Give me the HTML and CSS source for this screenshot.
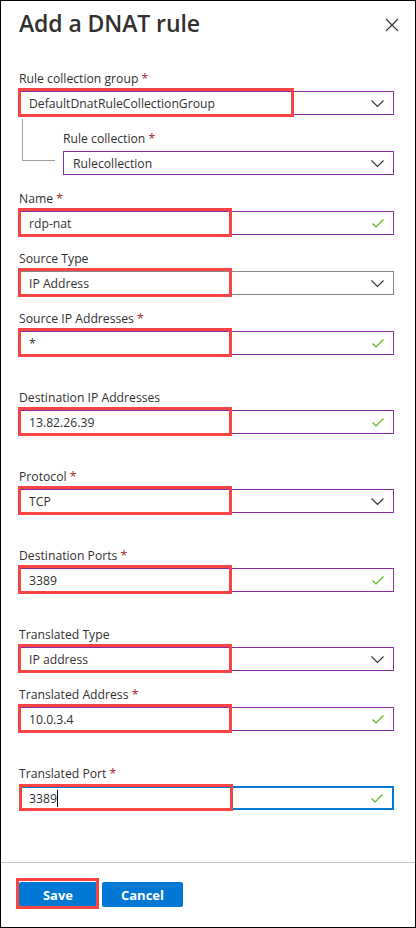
FILE: index.html
```html
<!DOCTYPE html>
<html>
<head>
<meta charset="utf-8">
<link rel="stylesheet" href="styles.css">
</head>
<body>
<div class="panel">
  <header class="head">
    <h1 class="title">Add a DNAT rule</h1>
    <button class="close" aria-label="Close">
      <svg width="14" height="14" viewBox="0 0 14 14"><path d="M1 1L13 13M13 1L1 13" stroke="#323130" stroke-width="1.1" fill="none"/></svg>
    </button>
  </header>

  <div class="form">
    <div class="field">
      <label class="label">Rule collection group <span class="req">*</span></label>
      <div class="input dirty">
        <span class="value">DefaultDnatRuleCollectionGroup</span>
        <svg class="chev" width="13" height="7" viewBox="0 0 13 7"><path d="M0.5 0.5L6.5 6.5L12.5 0.5" stroke="#323130" stroke-width="1.1" fill="none"/></svg>
        <span class="hl hl-wide"></span>
      </div>
    </div>

    <div class="field nested">
      <label class="label">Rule collection <span class="req">*</span></label>
      <div class="input dirty">
        <span class="value">Rulecollection</span>
        <svg class="chev" width="13" height="7" viewBox="0 0 13 7"><path d="M0.5 0.5L6.5 6.5L12.5 0.5" stroke="#323130" stroke-width="1.1" fill="none"/></svg>
      </div>
    </div>

    <div class="field">
      <label class="label">Name <span class="req">*</span></label>
      <div class="input dirty">
        <span class="value">rdp-nat</span>
        <svg class="check" width="12" height="9" viewBox="0 0 12 9"><path d="M0.5 4.5L4 8L11.5 0.5" stroke="#5fb21f" stroke-width="1.2" fill="none"/></svg>
        <span class="hl"></span>
      </div>
    </div>

    <div class="field">
      <label class="label">Source Type</label>
      <div class="input">
        <span class="value">IP Address</span>
        <svg class="chev" width="13" height="7" viewBox="0 0 13 7"><path d="M0.5 0.5L6.5 6.5L12.5 0.5" stroke="#323130" stroke-width="1.1" fill="none"/></svg>
        <span class="hl"></span>
      </div>
    </div>

    <div class="field spaced">
      <label class="label">Source IP Addresses <span class="req">*</span></label>
      <div class="input dirty">
        <span class="value">*</span>
        <svg class="check" width="12" height="9" viewBox="0 0 12 9"><path d="M0.5 4.5L4 8L11.5 0.5" stroke="#5fb21f" stroke-width="1.2" fill="none"/></svg>
        <span class="hl"></span>
      </div>
    </div>

    <div class="field spaced">
      <label class="label">Destination IP Addresses</label>
      <div class="input dirty">
        <span class="value">13.82.26.39</span>
        <svg class="check" width="12" height="9" viewBox="0 0 12 9"><path d="M0.5 4.5L4 8L11.5 0.5" stroke="#5fb21f" stroke-width="1.2" fill="none"/></svg>
        <span class="hl"></span>
      </div>
    </div>

    <div class="field spaced">
      <label class="label">Protocol <span class="req">*</span></label>
      <div class="input dirty">
        <span class="value">TCP</span>
        <svg class="chev" width="13" height="7" viewBox="0 0 13 7"><path d="M0.5 0.5L6.5 6.5L12.5 0.5" stroke="#323130" stroke-width="1.1" fill="none"/></svg>
        <span class="hl"></span>
      </div>
    </div>

    <div class="field spaced">
      <label class="label">Destination Ports <span class="req">*</span></label>
      <div class="input dirty">
        <span class="value">3389</span>
        <svg class="check" width="12" height="9" viewBox="0 0 12 9"><path d="M0.5 4.5L4 8L11.5 0.5" stroke="#5fb21f" stroke-width="1.2" fill="none"/></svg>
        <span class="hl"></span>
      </div>
    </div>

    <div class="field">
      <label class="label">Translated Type</label>
      <div class="input dirty">
        <span class="value">IP address</span>
        <svg class="chev" width="13" height="7" viewBox="0 0 13 7"><path d="M0.5 0.5L6.5 6.5L12.5 0.5" stroke="#323130" stroke-width="1.1" fill="none"/></svg>
        <span class="hl"></span>
      </div>
    </div>

    <div class="field spaced">
      <label class="label">Translated Address <span class="req">*</span></label>
      <div class="input dirty">
        <span class="value">10.0.3.4</span>
        <svg class="check" width="12" height="9" viewBox="0 0 12 9"><path d="M0.5 4.5L4 8L11.5 0.5" stroke="#5fb21f" stroke-width="1.2" fill="none"/></svg>
        <span class="hl"></span>
      </div>
    </div>

    <div class="field">
      <label class="label">Translated Port <span class="req">*</span></label>
      <div class="input focused">
        <span class="value">3389<span class="caret"></span></span>
        <svg class="check" width="12" height="9" viewBox="0 0 12 9"><path d="M0.5 4.5L4 8L11.5 0.5" stroke="#5fb21f" stroke-width="1.2" fill="none"/></svg>
        <span class="hl"></span>
      </div>
    </div>
  </div>

  <footer class="foot">
    <div class="btn-wrap">
      <button class="btn">Save</button>
      <span class="hl hl-btn"></span>
    </div>
    <button class="btn">Cancel</button>
  </footer>
</div>
</body>
</html>
```

FILE: styles.css
```css
* { box-sizing: border-box; }
html, body {
  margin: 0;
  padding: 0;
  background: #fff;
}
body {
  font-family: "Open Sans", "Noto Sans", sans-serif;
  color: #323130;
}
.panel {
  width: 416px;
  height: 928px;
  border: 1px solid #000;
  display: flex;
  flex-direction: column;
  position: relative;
}
.head {
  display: flex;
  justify-content: space-between;
  align-items: flex-start;
  padding: 4px 14px 0 18px;
  height: 69px;
}
.title {
  margin: 0;
  font-size: 23px;
  font-weight: 600;
  line-height: 36px;
  letter-spacing: -0.1px;
  color: #323130;
}
.close {
  border: 0;
  background: none;
  padding: 0;
  margin-top: 13px;
  width: 16px;
  height: 16px;
  display: flex;
}
.form {
  padding: 0 21px 0 18px;
  flex: 1;
}
.field {
  margin-bottom: 15px;
}
.field.spaced {
  margin-bottom: 34px;
}
.field.nested {
  padding-left: 44px;
  position: relative;
}
.field.nested::before {
  content: "";
  position: absolute;
  left: 3px;
  top: -11px;
  width: 32px;
  height: 41px;
  border-left: 1px solid #a19f9d;
  border-bottom: 1px solid #a19f9d;
}
.label {
  display: block;
  font-size: 12.2px;
  line-height: 18px;
  margin-bottom: 3px;
  color: #323130;
}
.req {
  color: #a4262c;
}
.input {
  position: relative;
  height: 24px;
  border: 1px solid #8a8886;
  display: flex;
  align-items: center;
  padding: 0 8px 0 9px;
  font-size: 12.2px;
}
.input.dirty {
  border-color: #8a2da5;
}
.input.focused {
  border: 2px solid #0078d4;
  padding-left: 8px;
}
.value {
  flex: 1;
  display: flex;
  align-items: center;
}
.caret {
  display: inline-block;
  width: 1px;
  height: 17px;
  background: #000;
}
.chev {
  margin-right: 1px;
}
.check {
  margin-right: 1px;
}
.hl {
  position: absolute;
  left: -2px;
  top: -4px;
  bottom: -3px;
  width: 214px;
  border: 3px solid #f84444;
  pointer-events: none;
}
.hl-wide {
  width: 276px;
}
.foot {
  border-top: 1px solid #c8c6c4;
  height: 65px;
  padding: 19px 0 0 18px;
  display: flex;
  gap: 5px;
  align-items: flex-start;
}
.btn-wrap {
  position: relative;
  display: flex;
}
.btn {
  height: 25px;
  min-width: 78px;
  padding: 0 16px;
  background: #0078d4;
  color: #fff;
  border: 0;
  border-radius: 2px;
  font-family: "Open Sans", "Noto Sans", sans-serif;
  font-size: 13px;
  font-weight: 700;
}
.foot > .btn {
  min-width: 81px;
}
.hl-btn {
  left: -3px;
  top: -4px;
  bottom: -2px;
  width: 83px;
}
```
